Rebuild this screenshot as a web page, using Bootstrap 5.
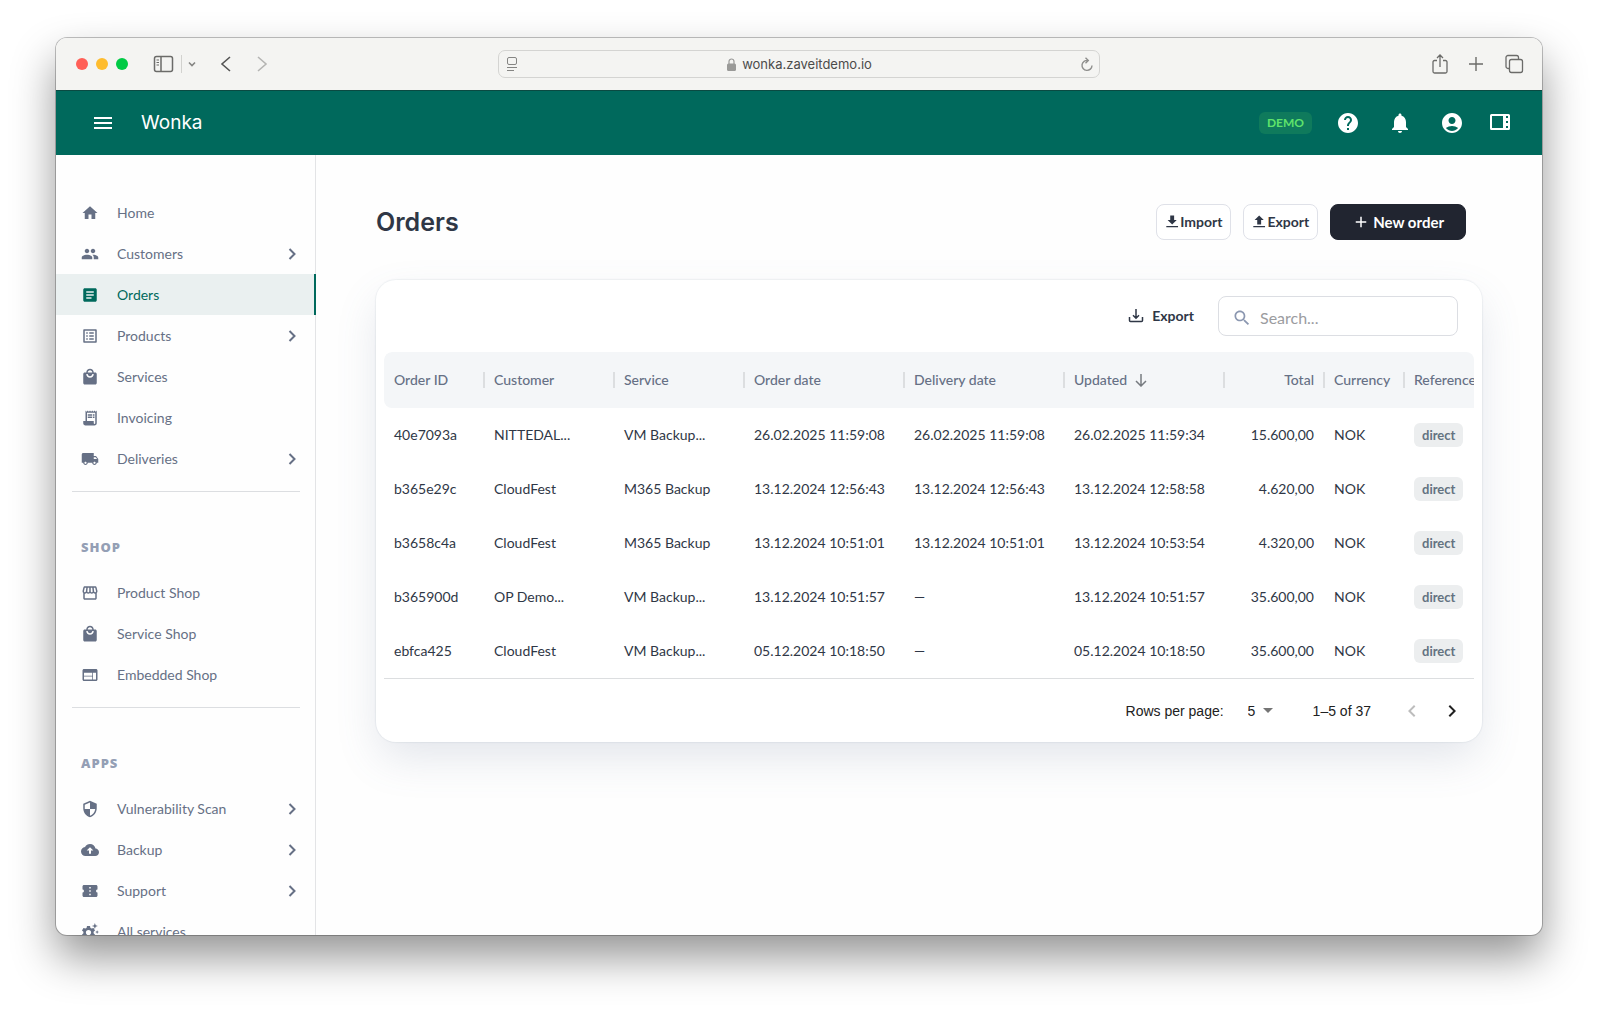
<!DOCTYPE html>
<html lang="en">
<head>
<meta charset="utf-8">
<meta name="viewport" content="width=device-width, initial-scale=1">
<title>Wonka – Orders</title>
<link rel="stylesheet" href="https://cdn.jsdelivr.net/npm/bootstrap@5.3.0/dist/css/bootstrap.min.css">
<style>
:root{--brand:#00695c;--ink:#2f3746;--slate:#667085;--line:#e3e4e6}
body{font-family:Lato,"Noto Sans",sans-serif;font-size:14px;line-height:20px;color:var(--ink);background:#fff;overflow:hidden}
svg{display:block;flex:none}
.desk{height:100vh;padding:38px 56px 74px}
.win{background:#fefefe;border-radius:11px;overflow:hidden;box-shadow:0 0 0 1px rgba(0,0,0,.24),0 22px 44px rgba(0,0,0,.42)}
.chrome{height:53px;flex:none;background:#f4f4f2;border-bottom:1px solid #0a4a42;padding:0 18px;display:grid;grid-template-columns:1fr 602px 1fr;color:#6b6b69}
.chrome-left{padding-left:2px}
.chrome-left .vr{margin:0 6px 0 7px}
.chrome-right{gap:18px}
.tool{background:none;border:0;padding:0;color:inherit;display:flex;align-items:center;justify-content:center}
.dot{width:12px;height:12px;border-radius:50%}
.dot-r{background:#ff5f57}.dot-y{background:#febc2e}.dot-g{background:#00ca45}
.addr{height:28px;border:1px solid #d4d4d2;border-radius:7px;padding:0 6px 0 7px;font:13px/20px Inter,sans-serif;color:#4b4b4a}
.addr span{gap:6px}
.topbar{height:64px;background:var(--brand);color:#fff;padding:0 30px 0 35px}
.brandname{font:19px/24px Inter,sans-serif;color:#fff;text-decoration:none;margin-left:26px}
.demo{background:#0f7a5c;color:#5fe36b;font-size:12px;font-weight:700;line-height:22px;border-radius:6px;padding:0 8px}
.wide-gap{gap:28px}
.side{width:260px;border-right:1px solid var(--line);padding-top:37px}
.side a{height:41px;padding:0 18px 0 25px;gap:18px;color:var(--slate);text-decoration:none}
.side a span{padding-top:1px}
.side a.on{background:#eaf0f0;color:var(--brand);border-right:2px solid var(--brand);margin-right:-1px}
.side hr{margin:12px 15px 0 16px;border-color:#dcdee1;opacity:1;height:0}
.side h2{font:800 13px/20px "Open Sans",sans-serif;color:#949fb5;letter-spacing:1px;margin:45px 25px 15px}
.main{padding:49px 60px 0;min-width:0}
.main h1{font:600 25px/36px Inter,sans-serif;margin:0;color:var(--ink)}
.act-row{gap:12px}
.act{height:36px;border:1px solid #dfe1e8;border-radius:8px;background:#fff;color:var(--ink);font-size:14px;line-height:20px;font-weight:700;padding:0 8px}
.act.dark{background:#212530;border-color:#212530;color:#fff;padding:0 21px;gap:3px;font-size:15px}
.panel{margin-top:40px;border-radius:20px;background:#fff;padding:16px 8px 0;box-shadow:0 0 1px 1px rgba(93,109,145,.08),0 18px 44px -4px rgba(93,109,145,.18)}
.find{width:240px;height:40px;border:1px solid #dcdee3;border-radius:8px;padding:3px 13px 0;gap:6px;color:#8b97b0}
.find input{border:0;outline:0;background:none;min-width:0;width:100%;font-size:16px;line-height:24px;color:var(--ink);padding:0 2px}
.find input::placeholder{color:#9b9c9f;opacity:1}
.gridwrap{overflow:hidden;border-bottom:1px solid #dcdee0;border-radius:8px 8px 0 0}
.orders{table-layout:fixed;width:1120px;border-collapse:separate;border-spacing:0}
.orders th{height:56px;background:#f4f6f8;color:var(--slate);font-weight:500;padding:0 10px;position:relative}
.orders th:first-child{border-radius:8px 0 0 8px}
.orders th:not(:last-child)::after{content:"";position:absolute;right:-1px;top:20px;width:2px;height:16px;background:#dcdee0;z-index:1}
.orders td{height:54px;padding:0 10px;white-space:nowrap;overflow:hidden;text-overflow:ellipsis}
.tag{display:inline-block;background:#eceeef;color:#647381;font-size:13px;font-weight:700;line-height:24px;border-radius:6px;padding:0 8px}
.pager{height:63px;font:14px/20px "Liberation Sans",sans-serif;color:#212121;padding-right:10px}
.pager select{appearance:none;border:0;background:none;color:inherit;font:inherit;padding:0;width:15px}
.pager .range{margin:0 29px 0 40px}
.pager [disabled]{color:#bdbdbd}
</style>
<script src="https://cdn.jsdelivr.net/npm/bootstrap@5.3.0/dist/js/bootstrap.bundle.min.js"></script>
</head>
<body>
<svg width="0" height="0" class="position-absolute" aria-hidden="true">
<defs>
<symbol id="home" viewBox="0 0 24 24"><path d="M10 20v-6h4v6h5v-8h3L12 3 2 12h3v8z"/></symbol>
<symbol id="group" viewBox="0 0 24 24"><path d="M16 11c1.66 0 2.99-1.34 2.99-3S17.66 5 16 5c-1.66 0-3 1.34-3 3s1.34 3 3 3zm-8 0c1.66 0 2.99-1.34 2.99-3S9.66 5 8 5C6.34 5 5 6.34 5 8s1.34 3 3 3zm0 2c-2.33 0-7 1.17-7 3.5V19h14v-2.5c0-2.33-4.67-3.5-7-3.5zm8 0c-.29 0-.62.02-.97.05 1.16.84 1.97 1.97 1.97 3.45V19h6v-2.5c0-2.33-4.67-3.5-7-3.5z"/></symbol>
<symbol id="article" viewBox="0 0 24 24"><path d="M19 3H5c-1.1 0-2 .9-2 2v14c0 1.1.9 2 2 2h14c1.1 0 2-.9 2-2V5c0-1.1-.9-2-2-2zm-5 14H7v-2h7v2zm3-4H7v-2h10v2zm0-4H7V7h10v2z"/></symbol>
<symbol id="list" viewBox="0 0 24 24"><path d="M19 5v14H5V5h14m1.1-2H3.9c-.5 0-.9.4-.9.9v16.2c0 .4.4.9.9.9h16.2c.4 0 .9-.5.9-.9V3.9c0-.5-.5-.9-.9-.9zM11 7h6v2h-6V7zm0 4h6v2h-6v-2zm0 4h6v2h-6zM7 7h2v2H7zm0 4h2v2H7zm0 4h2v2H7z"/></symbol>
<symbol id="bag" viewBox="0 0 24 24"><path d="M19 6h-2c0-2.76-2.24-5-5-5S7 3.24 7 6H5c-1.1 0-1.99.9-1.99 2L3 20c0 1.1.9 2 2 2h14c1.1 0 2-.9 2-2V8c0-1.1-.9-2-2-2zm-7-3c1.66 0 3 1.34 3 3H9c0-1.66 1.34-3 3-3zm0 10c-2.76 0-5-2.24-5-5h2c0 1.66 1.34 3 3 3s3-1.34 3-3h2c0 2.76-2.24 5-5 5z"/></symbol>
<symbol id="receipt" viewBox="0 0 24 24"><path d="M19.5 3.5L18 2l-1.5 1.5L15 2l-1.5 1.5L12 2l-1.5 1.5L9 2 7.5 3.5 6 2v14H3v3c0 1.66 1.34 3 3 3h12c1.66 0 3-1.34 3-3V2l-1.5 1.5zM19 19c0 .55-.45 1-1 1s-1-.45-1-1v-3H8V5h11v14zM9 7h6v2H9zM16 7h2v2h-2zM9 10h6v2H9zM16 10h2v2h-2z"/></symbol>
<symbol id="truck" viewBox="0 0 24 24"><path d="M20 8h-3V4H3c-1.1 0-2 .9-2 2v11h2c0 1.66 1.34 3 3 3s3-1.34 3-3h6c0 1.66 1.34 3 3 3s3-1.34 3-3h2v-5l-3-4zM6 18.500c-.83 0-1.5-.67-1.5-1.5s.67-1.5 1.500-1.500 1.500.67 1.500 1.500-.67 1.500-1.500 1.500zm13.500-9l1.960 2.500H17V9.500h2.500zm-1.500 9c-.83 0-1.500-.67-1.500-1.500s.67-1.500 1.500-1.500 1.500.67 1.500 1.500-.67 1.500-1.500 1.500z"/></symbol>
<symbol id="store" viewBox="0 0 24 24"><path d="M21.9 8.89l-1.05-4.37c-.22-.9-1-1.52-1.91-1.52H5.05c-.9 0-1.69.63-1.9 1.52L2.1 8.89c-.24 1.02-.02 2.06.62 2.88.08.11.19.19.28.29V19c0 1.1.9 2 2 2h14c1.1 0 2-.9 2-2v-6.94c.09-.09.2-.18.28-.28.64-.82.87-1.87.62-2.89zm-2.99-3.9l1.05 4.37c.1.42.01.84-.25 1.17-.14.18-.44.47-.94.47-.61 0-1.14-.49-1.21-1.14L16.98 5l1.93-.01zM13 5h1.96l.54 4.52c.05.39-.07.78-.33 1.07-.22.26-.54.41-.95.41-.67 0-1.22-.59-1.22-1.31V5zM8.49 9.52L9.04 5H11v4.69c0 .72-.55 1.31-1.29 1.31-.34 0-.65-.15-.89-.41-.25-.29-.37-.68-.33-1.07zm-4.45-.16L5.05 5h1.97l-.58 4.86c-.08.65-.6 1.14-1.21 1.14-.49 0-.8-.29-.93-.47-.27-.32-.36-.75-.26-1.17zM5 19v-6.03c.08.01.15.03.23.03.87 0 1.66-.36 2.24-.95.6.6 1.4.95 2.31.95.87 0 1.65-.36 2.23-.93.59.57 1.39.93 2.29.93.84 0 1.64-.35 2.24-.95.58.59 1.37.95 2.24.95.08 0 .15-.02.23-.03V19H5z"/></symbol>
<symbol id="web" viewBox="0 0 24 24"><path d="M20 4H4c-1.1 0-1.99.9-1.99 2L2 18c0 1.1.9 2 2 2h16c1.1 0 2-.9 2-2V6c0-1.1-.9-2-2-2zm-5 14H4v-4h11v4zm0-5H4V9h11v4zm5 5h-4V9h4v9z"/></symbol>
<symbol id="shield" viewBox="0 0 24 24"><path d="M12 1L3 5v6c0 5.550 3.840 10.740 9 12 5.160-1.260 9-6.450 9-12V5l-9-4zm0 10.990h7c-.53 4.120-3.280 7.790-7 8.940V12H5V6.300l7-3.110v8.800z"/></symbol>
<symbol id="cloud" viewBox="0 0 24 24"><path d="M19.350 10.040C18.670 6.590 15.640 4 12 4 9.110 4 6.600 5.640 5.350 8.040 2.340 8.360 0 10.910 0 14c0 3.310 2.690 6 6 6h13c2.760 0 5-2.240 5-5 0-2.640-2.050-4.780-4.650-4.960zM13.300 12.800V17h-2.600v-4.200H7.500L12 8.200l4.500 4.600z"/></symbol>
<symbol id="ticket" viewBox="0 0 24 24"><path d="M22 10V6c0-1.110-.9-2-2-2H4c-1.100 0-1.990.89-1.990 2v4c1.100 0 1.990.9 1.990 2s-.89 2-2 2v4c0 1.100.9 2 2 2h16c1.100 0 2-.9 2-2v-4c-1.100 0-2-.9-2-2s.9-2 2-2zm-9 7.500h-2v-2h2v2zm0-4.500h-2v-2h2v2zm0-4.500h-2v-2h2v2z"/></symbol>
<symbol id="gear" viewBox="0 0 24 24"><path fill-rule="evenodd" d="M8 4h4l.6 2.500 1.600.9 2.500-.8 2 3.400-1.900 1.800v1.900l1.900 1.800-2 3.400-2.500-.8-1.600.9L12 21.500H8L7.400 19l-1.600-.9-2.500.8-2-3.400 1.900-1.800v-1.900L1.300 10l2-3.400 2.500.8 1.600-.9zM10 9.200a3.500 3.500 0 1 0 0 7 3.500 3.500 0 0 0 0-7z"/><path d="M18.500 0l1.100 2.900L22.500 4l-2.900 1.100L18.500 8l-1.100-2.900L14.500 4l2.900-1.100zM21.500 9.500l.8 1.700 1.700.8-1.700.8-.8 1.700-.8-1.700-1.700-.8 1.700-.8z"/></symbol>
<symbol id="chev" viewBox="0 0 10 14"><path d="M2.500 2l5 5-5 5" fill="none" stroke="currentColor" stroke-width="2"/></symbol>
<symbol id="search" viewBox="0 0 24 24"><path d="M15.500 14h-.79l-.28-.27C15.410 12.590 16 11.110 16 9.500 16 5.910 13.090 3 9.500 3S3 5.910 3 9.500 5.910 16 9.500 16c1.610 0 3.090-.59 4.230-1.570l.27.28v.79l5 4.990L20.490 19l-4.990-5zm-6 0C7.010 14 5 11.990 5 9.500S7.010 5 9.500 5 14 7.010 14 9.500 11.990 14 9.500 14z"/></symbol>
</defs>
</svg>
<div class="desk">
<div class="win h-100 d-flex flex-column">
  <header class="chrome align-items-center">
    <div class="chrome-left d-flex align-items-center">
      <span class="dot dot-r"></span><span class="dot dot-y ms-2"></span><span class="dot dot-g ms-2"></span>
      <button class="tool ms-4" aria-label="Sidebar"><svg width="22" height="18" viewBox="0 0 22 18" fill="none" stroke="currentColor" stroke-width="1.500"><rect x="2.500" y="1.500" width="18" height="15" rx="2"/><path d="M9 2v14"/><path d="M4.500 5h2.500M4.500 7.500h2.500M4.500 10h2.500" stroke-width="1"/></svg></button>
      <span class="vr"></span>
      <button class="tool" aria-label="Tab groups"><svg width="8" height="6" viewBox="0 0 8 6" fill="none" stroke="#858583" stroke-width="1.600"><path d="M1 1.500l3 3 3-3"/></svg></button>
      <button class="tool ms-4" aria-label="Back"><svg width="12" height="16" viewBox="0 0 12 16" fill="none" stroke="#555" stroke-width="1.600"><path d="M10 1L2 8l8 7"/></svg></button>
      <button class="tool ms-4" aria-label="Forward"><svg width="12" height="16" viewBox="0 0 12 16" fill="none" stroke="#b5b5b3" stroke-width="1.600"><path d="M2 1l8 7-8 7"/></svg></button>
    </div>
    <div class="addr d-flex align-items-center justify-content-between">
      <svg width="12" height="14" viewBox="0 0 12 14" fill="none" stroke="#858583"><rect x="1.500" y=".5" width="9" height="7" rx="1.500"/><path d="M1 10.500h10M1 13.500h7"/></svg>
      <span class="d-flex align-items-center"><svg width="9" height="13" viewBox="0 0 9 13"><path d="M2 6V3.500a2.500 2.500 0 0 1 5 0V6" fill="none" stroke="#9a9a98" stroke-width="1.200"/><rect y="5.500" width="9" height="7.500" rx="1.500" fill="#9a9a98"/></svg>wonka.zaveitdemo.io</span>
      <button class="tool" aria-label="Reload"><svg width="12" height="15" viewBox="0 0 12 15" fill="none" stroke="#8f8f8d" stroke-width="1.400"><path d="M7 3.500A5 5 0 1 0 11 8.500M4.500 .8L7.300 3.500 4.500 6.200"/></svg></button>
    </div>
    <div class="chrome-right d-flex align-items-center justify-content-end">
      <button class="tool" aria-label="Share"><svg width="16" height="20" viewBox="0 0 16 20" fill="none" stroke="currentColor" stroke-width="1.300"><path d="M5 6.500H2.500A1.500 1.500 0 0 0 1 8v9.500A1.500 1.500 0 0 0 2.500 19h11a1.500 1.500 0 0 0 1.500-1.500V8a1.500 1.500 0 0 0-1.500-1.500H11M8 13V1M5 4l3-3 3 3"/></svg></button>
      <button class="tool" aria-label="New tab"><svg width="20" height="16" viewBox="0 0 20 16" stroke="currentColor" stroke-width="1.400"><path d="M10 1v14M3 8h14"/></svg></button>
      <button class="tool" aria-label="Tabs"><svg width="20" height="20" viewBox="0 0 20 20" fill="none" stroke="currentColor" stroke-width="1.300"><rect x="5.500" y="5.500" width="13" height="13" rx="2"/><path d="M5.500 14.500H4a2 2 0 0 1-2-2V3.500a2 2 0 0 1 2-2h8.500a2 2 0 0 1 2 2v2"/></svg></button>
    </div>
  </header>
  <nav class="topbar d-flex align-items-center flex-shrink-0">
    <button class="tool" aria-label="Menu"><svg width="24" height="24" viewBox="0 0 24 24" fill="#fff"><path d="M3 18h18v-2H3v2zm0-5h18v-2H3v2zm0-7v2h18V6H3z"/></svg></button>
    <a class="brandname" href="#">Wonka</a>
    <span class="demo ms-auto">DEMO</span>
    <div class="wide-gap d-flex align-items-center ms-4">
    <button class="tool" aria-label="Help"><svg width="24" height="24" viewBox="0 0 24 24" fill="#fff"><path d="M12 2C6.480 2 2 6.480 2 12s4.480 10 10 10 10-4.480 10-10S17.520 2 12 2zm1 17h-2v-2h2v2zm2.070-7.750l-.9.92C13.450 12.900 13 13.500 13 15h-2v-.5c0-1.100.45-2.100 1.170-2.830l1.240-1.260c.37-.36.59-.86.59-1.410 0-1.100-.9-2-2-2s-2 .9-2 2H8c0-2.210 1.790-4 4-4s4 1.790 4 4c0 .88-.36 1.680-.93 2.250z"/></svg></button>
    <button class="tool" aria-label="Notifications"><svg width="24" height="24" viewBox="0 0 24 24" fill="#fff"><path d="M12 22c1.100 0 2-.9 2-2h-4c0 1.100.89 2 2 2zm6-6v-5c0-3.070-1.640-5.640-4.500-6.320V4c0-.83-.67-1.500-1.500-1.500s-1.500.67-1.500 1.500v.68C7.630 5.360 6 7.920 6 11v5l-2 2v1h16v-1l-2-2z"/></svg></button>
    <button class="tool" aria-label="Account"><svg width="24" height="24" viewBox="0 0 24 24" fill="#fff"><path d="M12 2C6.480 2 2 6.480 2 12s4.480 10 10 10 10-4.480 10-10S17.520 2 12 2zm0 4c1.930 0 3.500 1.570 3.500 3.500S13.930 13 12 13s-3.500-1.570-3.500-3.500S10.070 6 12 6zm0 14c-2.030 0-4.430-.82-6.140-2.880C7.550 15.800 9.680 15 12 15s4.450.8 6.140 2.120C16.430 19.180 14.030 20 12 20z"/></svg></button>
    </div>
    <button class="tool ms-4" aria-label="Panel"><svg width="24" height="24" viewBox="0 0 24 24" fill="#fff" fill-rule="evenodd"><path d="M3.500 3h17A1.500 1.500 0 0 1 22 4.500v13a1.500 1.500 0 0 1-1.500 1.500h-17A1.500 1.500 0 0 1 2 17.500v-13A1.500 1.500 0 0 1 3.500 3zM4 5v12h11V5zM18 5v2h2V5zM18 10v2h2v-2zM18 15v2h2v-2z"/></svg></button>
  </nav>
  <div class="d-flex flex-fill overflow-hidden">
    <aside class="side flex-shrink-0">
      <a class="d-flex align-items-center" href="#"><svg width="18" height="18" fill="currentColor"><use href="#home"/></svg><span class="flex-fill">Home</span></a>
      <a class="d-flex align-items-center" href="#"><svg width="18" height="18" fill="currentColor"><use href="#group"/></svg><span class="flex-fill">Customers</span><svg width="10" height="14"><use href="#chev"/></svg></a>
      <a class="d-flex align-items-center on" href="#" aria-current="page"><svg width="18" height="18" fill="currentColor"><use href="#article"/></svg><span class="flex-fill">Orders</span></a>
      <a class="d-flex align-items-center" href="#"><svg width="18" height="18" fill="currentColor"><use href="#list"/></svg><span class="flex-fill">Products</span><svg width="10" height="14"><use href="#chev"/></svg></a>
      <a class="d-flex align-items-center" href="#"><svg width="18" height="18" fill="currentColor"><use href="#bag"/></svg><span class="flex-fill">Services</span></a>
      <a class="d-flex align-items-center" href="#"><svg width="18" height="18" fill="currentColor"><use href="#receipt"/></svg><span class="flex-fill">Invoicing</span></a>
      <a class="d-flex align-items-center" href="#"><svg width="18" height="18" fill="currentColor"><use href="#truck"/></svg><span class="flex-fill">Deliveries</span><svg width="10" height="14"><use href="#chev"/></svg></a>
      <hr>
      <h2>SHOP</h2>
      <a class="d-flex align-items-center" href="#"><svg width="18" height="18" fill="currentColor"><use href="#store"/></svg><span class="flex-fill">Product Shop</span></a>
      <a class="d-flex align-items-center" href="#"><svg width="18" height="18" fill="currentColor"><use href="#bag"/></svg><span class="flex-fill">Service Shop</span></a>
      <a class="d-flex align-items-center" href="#"><svg width="18" height="18" fill="currentColor"><use href="#web"/></svg><span class="flex-fill">Embedded Shop</span></a>
      <hr>
      <h2>APPS</h2>
      <a class="d-flex align-items-center" href="#"><svg width="18" height="18" fill="currentColor"><use href="#shield"/></svg><span class="flex-fill">Vulnerability Scan</span><svg width="10" height="14"><use href="#chev"/></svg></a>
      <a class="d-flex align-items-center" href="#"><svg width="18" height="18" fill="currentColor"><use href="#cloud"/></svg><span class="flex-fill">Backup</span><svg width="10" height="14"><use href="#chev"/></svg></a>
      <a class="d-flex align-items-center" href="#"><svg width="18" height="18" fill="currentColor"><use href="#ticket"/></svg><span class="flex-fill">Support</span><svg width="10" height="14"><use href="#chev"/></svg></a>
      <a class="d-flex align-items-center" href="#"><svg width="18" height="18" fill="currentColor"><use href="#gear"/></svg><span class="flex-fill">All services</span></a>
    </aside>
    <main class="main flex-fill">
      <div class="d-flex align-items-center pe-3">
        <h1 class="me-auto">Orders</h1>
        <div class="d-flex act-row">
          <button class="act d-flex align-items-center"><svg width="15" height="16" viewBox="1 0 23 24" fill="currentColor"><path d="M19 9h-4V2H9v7H5l7 7 7-7zM3 18v2h18v-2z"/></svg>Import</button>
          <button class="act d-flex align-items-center"><svg width="15" height="16" viewBox="1 0 23 24" fill="currentColor"><path d="M9 16h6V9h4l-7-7-7 7h4zM3 18h18v2H3z"/></svg>Export</button>
          <button class="act dark d-flex align-items-center"><svg width="18" height="18" viewBox="0 0 24 24" fill="currentColor"><path d="M19 13h-6v6h-2v-6H5v-2h6V5h2v6h6z"/></svg>New order</button>
        </div>
      </div>
      <section class="panel">
        <div class="d-flex align-items-center justify-content-end gap-4 pe-3 pb-3">
          <button class="tool fw-bold gap-2"><svg width="16" height="16" viewBox="0 0 16 16" fill="none" stroke="currentColor" stroke-width="1.500"><path d="M1.500 9v3.500a1 1 0 0 0 1 1h11a1 1 0 0 0 1-1V9M8 1v9M5 7.200l3 3 3-3"/></svg>Export</button>
          <label class="find d-flex align-items-center"><svg width="20" height="20" fill="currentColor"><use href="#search"/></svg><input type="search" placeholder="Search..." aria-label="Search"></label>
        </div>
        <div class="gridwrap">
          <table class="orders">
            <colgroup><col style="width:100px"><col style="width:130px"><col style="width:130px"><col style="width:160px"><col style="width:160px"><col style="width:160px"><col style="width:100px"><col style="width:80px"><col style="width:100px"></colgroup>
            <thead><tr><th>Order ID</th><th>Customer</th><th>Service</th><th>Order date</th><th>Delivery date</th><th><span class="d-flex align-items-center gap-2">Updated <svg width="12" height="13" viewBox="0 0 12 13" fill="none" stroke="#777b80" stroke-width="1.500"><path d="M6 0v12M1 7l5 5 5-5"/></svg></span></th><th class="text-end">Total</th><th>Currency</th><th>Reference</th></tr></thead>
            <tbody>
            <tr><td>40e7093a</td><td>NITTEDAL...</td><td>VM Backup...</td><td>26.02.2025 11:59:08</td><td>26.02.2025 11:59:08</td><td>26.02.2025 11:59:34</td><td class="text-end">15.600,00</td><td>NOK</td><td><span class="tag">direct</span></td></tr>
            <tr><td>b365e29c</td><td>CloudFest</td><td>M365 Backup</td><td>13.12.2024 12:56:43</td><td>13.12.2024 12:56:43</td><td>13.12.2024 12:58:58</td><td class="text-end">4.620,00</td><td>NOK</td><td><span class="tag">direct</span></td></tr>
            <tr><td>b3658c4a</td><td>CloudFest</td><td>M365 Backup</td><td>13.12.2024 10:51:01</td><td>13.12.2024 10:51:01</td><td>13.12.2024 10:53:54</td><td class="text-end">4.320,00</td><td>NOK</td><td><span class="tag">direct</span></td></tr>
            <tr><td>b365900d</td><td>OP Demo...</td><td>VM Backup...</td><td>13.12.2024 10:51:57</td><td>—</td><td>13.12.2024 10:51:57</td><td class="text-end">35.600,00</td><td>NOK</td><td><span class="tag">direct</span></td></tr>
            <tr><td>ebfca425</td><td>CloudFest</td><td>VM Backup...</td><td>05.12.2024 10:18:50</td><td>—</td><td>05.12.2024 10:18:50</td><td class="text-end">35.600,00</td><td>NOK</td><td><span class="tag">direct</span></td></tr>
            </tbody>
          </table>
        </div>
        <div class="pager d-flex align-items-center justify-content-end">
          <label for="rpp" class="me-4">Rows per page:</label>
          <select id="rpp"><option>5</option><option>10</option></select>
          <svg width="10" height="5" viewBox="0 0 10 5" fill="#757575"><path d="M0 0h10L5 5z"/></svg>
          <span class="range">1–5 of 37</span>
          <button class="tool" aria-label="Previous page" disabled><svg width="24" height="24" viewBox="0 0 24 24" fill="currentColor"><path d="M15.410 7.410L14 6l-6 6 6 6 1.410-1.410L10.830 12z"/></svg></button>
          <button class="tool ms-3" aria-label="Next page"><svg width="24" height="24" viewBox="0 0 24 24" fill="currentColor"><path d="M8.590 16.590L10 18l6-6-6-6-1.410 1.410L13.170 12z"/></svg></button>
        </div>
      </section>
    </main>
  </div>
</div>
</div>
</body>
</html>
